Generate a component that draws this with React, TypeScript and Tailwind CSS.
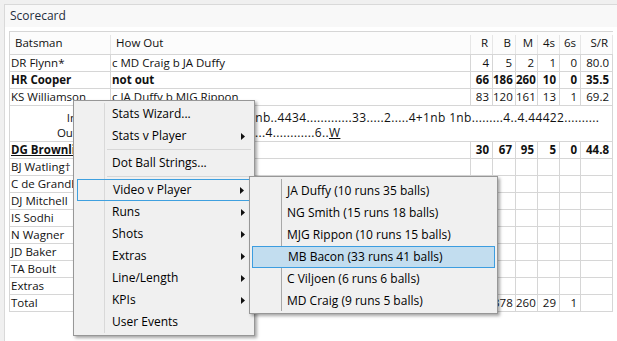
import React from 'react';

type Row = {
  name: string;
  out?: string;
  vals?: string[];
  bold?: boolean;
  underline?: boolean;
};

const widths = ['w-[101px]', 'w-[360px]', 'w-[22px]', 'w-[23px]', 'w-[22px]', 'w-[22px]', 'w-[21px]', 'w-[32px]'];

const topRows: Row[] = [
  { name: 'DR Flynn*', out: 'c MD Craig b JA Duffy', vals: ['4', '5', '2', '1', '0', '80.0'] },
  { name: 'HR Cooper', out: 'not out', vals: ['66', '186', '260', '10', '0', '35.5'], bold: true },
  { name: 'KS Williamson', out: 'c JA Duffy b MJG Rippon', vals: ['83', '120', '161', '13', '1', '69.2'] },
];

const bottomRows: Row[] = [
  { name: 'DG Brownlie', out: 'not out', vals: ['30', '67', '95', '5', '0', '44.8'], bold: true, underline: true },
  { name: 'BJ Watling†' },
  { name: 'C de Grandhomme' },
  { name: 'DJ Mitchell' },
  { name: 'IS Sodhi' },
  { name: 'N Wagner' },
  { name: 'JD Baker' },
  { name: 'TA Boult' },
  { name: 'Extras', vals: ['12', '', '', '', '', ''] },
  { name: 'Total', vals: ['227', '378', '260', '29', '1', ''] },
];

const menuItems: (string | { label: string; sub?: boolean; open?: boolean })[] = [
  { label: 'Stats Wizard...' },
  { label: 'Stats v Player', sub: true },
  '-',
  { label: 'Dot Ball Strings...' },
  '-',
  { label: 'Video v Player', sub: true, open: true },
  { label: 'Runs', sub: true },
  { label: 'Shots', sub: true },
  { label: 'Extras', sub: true },
  { label: 'Line/Length', sub: true },
  { label: 'KPIs', sub: true },
  { label: 'User Events' },
];

const players = [
  'JA Duffy (10 runs 35 balls)',
  'NG Smith (15 runs 18 balls)',
  'MJG Rippon (10 runs 15 balls)',
  'MB Bacon (33 runs 41 balls)',
  'C Viljoen (6 runs 6 balls)',
  'MD Craig (9 runs 5 balls)',
];

function DataRow({ row }: { row: Row }) {
  const vals = row.vals ?? ['', '', '', '', '', ''];
  return (
    <div className={`flex h-[17px] border-b border-[#d6d6d6] leading-[16px] ${row.bold ? 'font-bold' : ''}`}>
      <div className={`${widths[0]} shrink-0 border-r border-[#d6d6d6] pl-[1px] overflow-hidden whitespace-nowrap`}>
        <span className={row.underline ? 'underline' : ''}>{row.name}</span>
      </div>
      <div className={`${widths[1]} shrink-0 border-r border-[#d6d6d6] pl-[1px] overflow-hidden whitespace-nowrap`}>
        {row.out}
      </div>
      {vals.map((v, i) => (
        <div
          key={i}
          className={`${widths[i + 2]} shrink-0 border-r border-[#d6d6d6] pr-[3px] text-right overflow-hidden whitespace-nowrap`}
        >
          {v}
        </div>
      ))}
    </div>
  );
}

function Arrow() {
  return (
    <svg width="4" height="7" viewBox="0 0 4 7">
      <path d="M0 0 L4 3.5 L0 7 Z" fill="#111" />
    </svg>
  );
}

export default function App() {
  const heads = ['R', 'B', 'M', '4s', '6s', 'S/R'];

  return (
    <div className="relative w-[617px] h-[341px] overflow-hidden bg-[#f0f0f0] pt-[4px] pl-[4px] font-['Open_Sans',sans-serif] text-[11.5px] text-[#111]">
      {/* Scorecard panel */}
      <div className="h-full border-l border-t border-[#d9d9d9] bg-white">
        <div className="h-[22px] bg-[#f8f8f8] pl-[5px] leading-[22px] text-[12px] text-[#1f2d3d]">Scorecard</div>

        <div className="ml-[4px] mt-[4px] w-[604px] border-l border-t border-[#d6d6d6]">
          {/* Header */}
          <div className="flex h-[23px] border-b border-[#d6d6d6] bg-[#fcfcfc] pt-[3px] leading-[16px]">
            <div className={`${widths[0]} shrink-0 border-r border-[#e6e6e6] pl-[5px]`}>Batsman</div>
            <div className={`${widths[1]} shrink-0 border-r border-[#e6e6e6] pl-[5px]`}>How Out</div>
            {heads.map((h, i) => (
              <div key={h} className={`${widths[i + 2]} shrink-0 border-r border-[#e6e6e6] pr-[4px] text-right`}>
                {h}
              </div>
            ))}
          </div>

          {topRows.map((r) => (
            <DataRow key={r.name} row={r} />
          ))}

          {/* Ball strings */}
          <div className="flex h-[36px] border-b border-r border-[#d6d6d6] pt-[4px] leading-[15px] whitespace-nowrap overflow-hidden">
            <div className="w-[67px] shrink-0 text-right">
              <div>In</div>
              <div>Out</div>
            </div>
            <div className="ml-[171px] text-[12px] tracking-[0.35px]">
              <div>1nb..4434.............33.....2.....4+1nb 1nb.........4..4.44422..........</div>
              <div>
                .....4............6..<span className="underline">W</span>
              </div>
            </div>
          </div>

          {bottomRows.map((r) => (
            <DataRow key={r.name} row={r} />
          ))}
        </div>
      </div>

      {/* Context menu */}
      <div className="absolute left-[73px] top-[100px] w-[182px] border border-[#979797] bg-[#f0f0f0] px-[3px] py-[2px] shadow-[2px_2px_3px_rgba(0,0,0,0.35)] text-[12px] text-black">
        <div className="absolute left-[30px] top-[2px] bottom-[2px] w-px bg-[#d9d9d9]" />
        {menuItems.map((m, i) =>
          typeof m === 'string' ? (
            <div key={i} className="flex h-[5px] items-center pl-[30px]">
              <div className="h-px w-full bg-[#d7d7d7]" />
            </div>
          ) : (
            <div
              key={i}
              className={`relative flex h-[22px] items-center justify-between pl-[35px] pr-[6px] ${
                m.open ? 'border border-[#3fa0df] pl-[34px] pr-[5px]' : ''
              }`}
            >
              <span>{m.label}</span>
              {m.sub && <Arrow />}
            </div>
          )
        )}
      </div>

      {/* Submenu */}
      <div className="absolute left-[249px] top-[176px] w-[249px] border border-[#979797] bg-[#f0f0f0] pl-[2px] pr-[2px] pt-[3px] pb-[1px] shadow-[2px_2px_3px_rgba(0,0,0,0.35)] text-[12px] text-black">
        <div className="absolute left-[31px] top-[2px] bottom-[2px] w-px bg-[#a8a8a8]" />
        {players.map((p, i) => (
          <div
            key={p}
            className={`relative flex h-[22px] items-center pl-[35px] ${
              i === 3 ? 'border border-[#3c9de0] bg-[#c2ddef] pl-[34px]' : ''
            }`}
          >
            {p}
          </div>
        ))}
      </div>
    </div>
  );
}
